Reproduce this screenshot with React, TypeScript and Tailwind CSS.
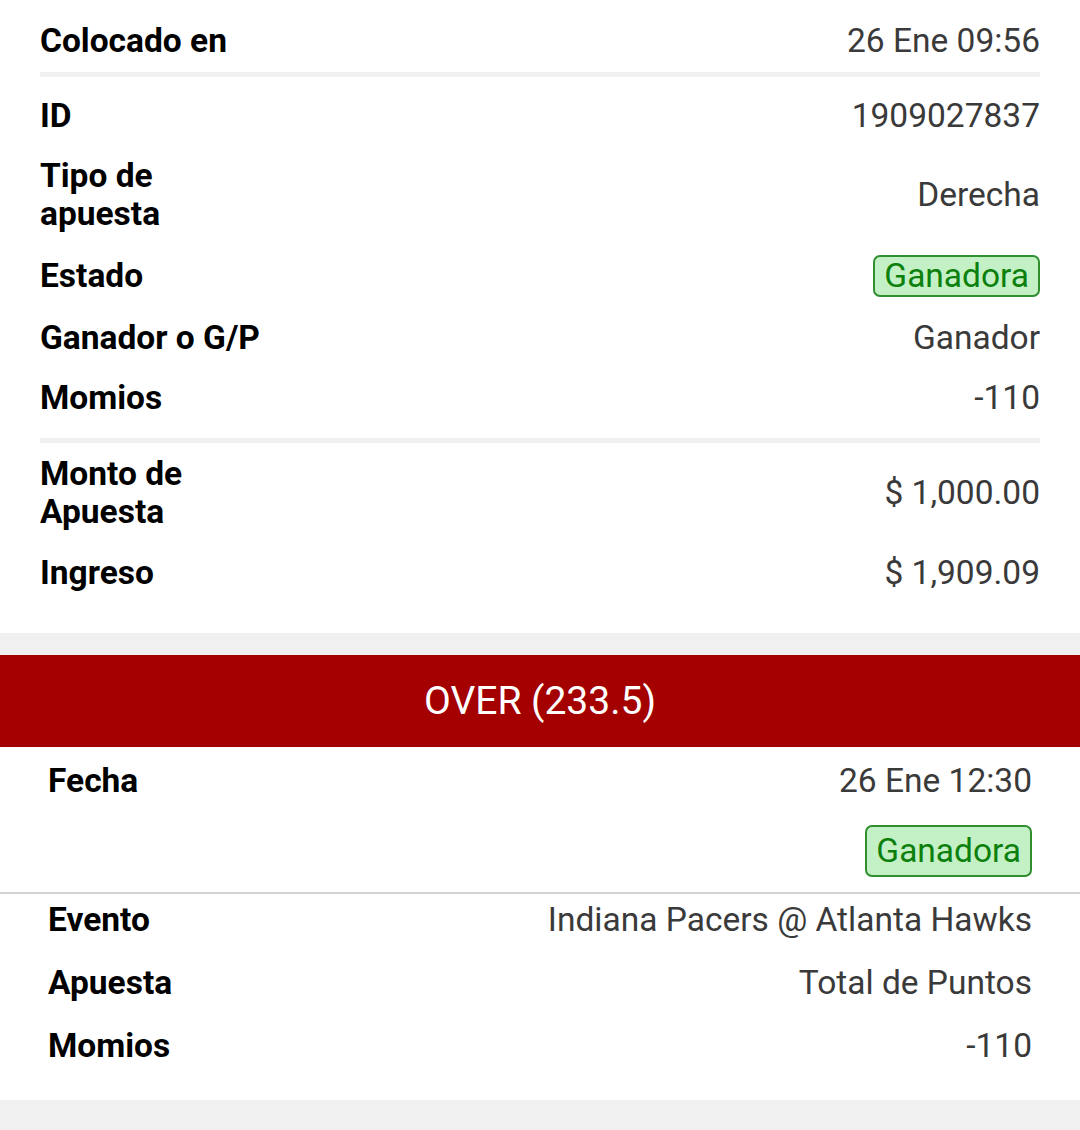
import React from 'react';

function Row({ label, value, className = '' }: { label: React.ReactNode; value: React.ReactNode; className?: string }) {
  return (
    <div className={`flex items-center justify-between ${className}`}>
      <div className="font-bold text-black">{label}</div>
      <div className="text-[#3a3a3a] text-right">{value}</div>
    </div>
  );
}

function Badge({ tall = false }: { tall?: boolean }) {
  return (
    <span
      className={`inline-block rounded-[7px] border-2 border-[#2f8f2f] bg-[#c3f1c5] px-[9px] text-[#0c7f0c] leading-[38px] ${
        tall ? 'py-[5px]' : 'py-0'
      }`}
    >
      Ganadora
    </span>
  );
}

export default function App() {
  return (
    <div className="min-h-[1130px] bg-[#f0f0f0] text-[33.5px] leading-[38px] font-['Roboto',sans-serif]">
      {/* Bet summary */}
      <div className="bg-white px-[40px] pt-[11px] pb-[31px]">
        <Row className="py-[11px]" label="Colocado en" value="26 Ene 09:56" />
        <div className="mt-[1px] mb-[9px] h-[5px] bg-[#f0f0f0]" />
        <Row className="py-[11px]" label="ID" value="1909027837" />
        <Row
          className="py-[11px]"
          label={
            <>
              Tipo de
              <br />
              apuesta
            </>
          }
          value="Derecha"
        />
        <Row className="py-[11px]" label="Estado" value={<Badge />} />
        <Row className="py-[11px]" label="Ganador o G/P" value="Ganador" />
        <Row className="py-[11px]" label="Momios" value="-110" />
        <div className="mt-[10px] h-[5px] bg-[#f0f0f0]" />
        <Row
          className="pt-[12px] pb-[11px]"
          label={
            <>
              Monto de
              <br />
              Apuesta
            </>
          }
          value="$ 1,000.00"
        />
        <Row className="pt-[12px] pb-[10px]" label="Ingreso" value="$ 1,909.09" />
      </div>

      {/* Selection */}
      <div className="mt-[22px] bg-[#a40000] h-[92px] flex items-center justify-center text-white text-[39px]">
        OVER (233.5)
      </div>
      <div className="bg-white">
        <div className="px-[48px] pt-[15px] pb-[15px]">
          <Row label="Fecha" value="26 Ene 12:30" />
          <div className="mt-[25px] flex justify-end">
            <Badge tall />
          </div>
        </div>
        <div className="h-[2px] bg-[#d4d4d4]" />
        <div className="px-[48px] pt-[7px] pb-[35px] flex flex-col gap-[25px]">
          <Row label="Evento" value="Indiana Pacers @ Atlanta Hawks" />
          <Row label="Apuesta" value="Total de Puntos" />
          <Row label="Momios" value="-110" />
        </div>
      </div>
    </div>
  );
}
